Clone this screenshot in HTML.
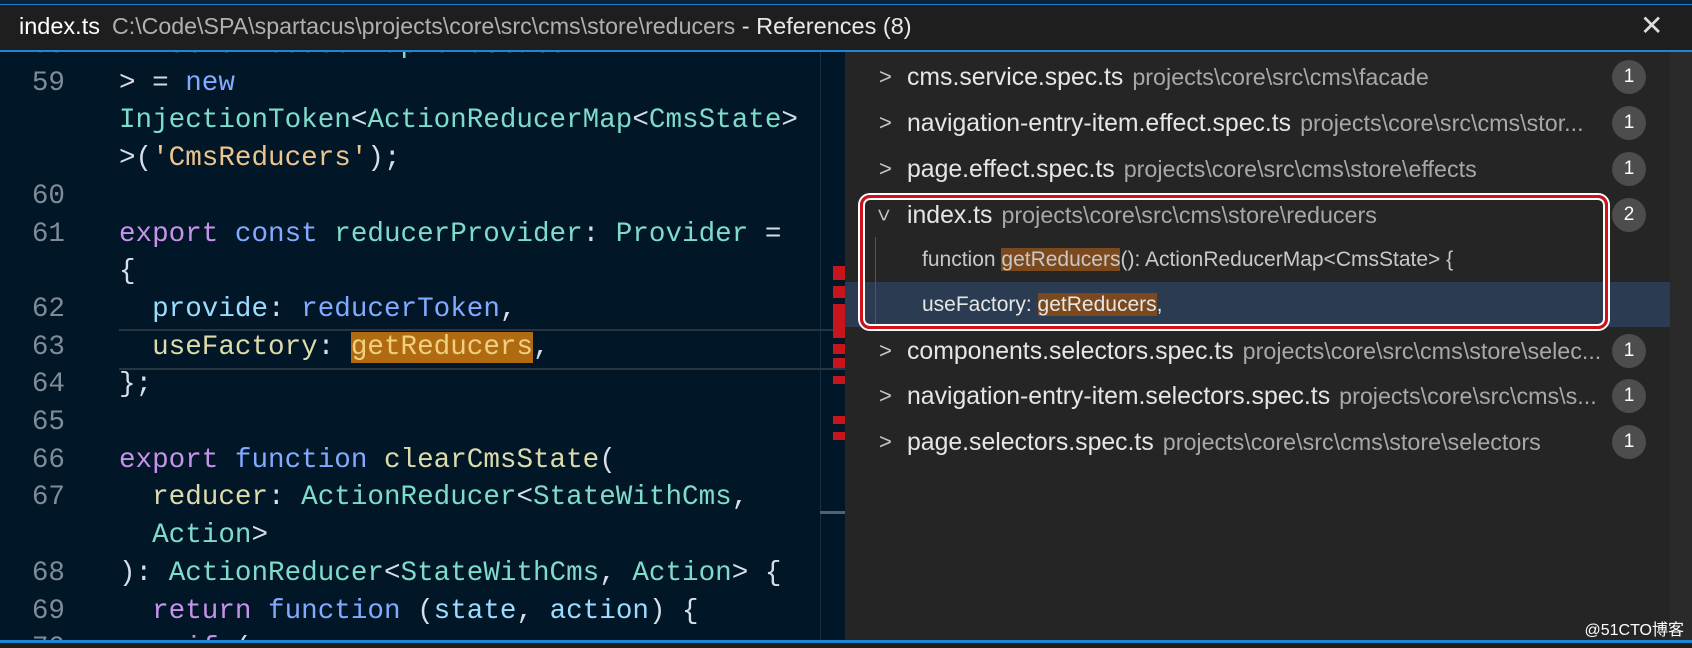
<!DOCTYPE html>
<html><head><meta charset="utf-8"><style>
body{margin:0;width:1692px;height:648px;overflow:hidden;background:#1e1e1e;position:relative;font-family:"Liberation Sans",sans-serif}
.abs{position:absolute}
#top{left:0;top:0;width:1692px;height:4px;background:#0d2236;border-bottom:1px solid #1f7ccf}
#hdr{left:0;top:5px;width:1692px;height:45px;background:#1e1e1e;border-bottom:2px solid #1f86d6;white-space:nowrap}
#ed{left:0;top:52px;width:845px;height:588px;background:#011627;overflow:hidden}
#code{left:0;top:-25px;font-family:"Liberation Mono",monospace;font-size:27.6px;line-height:37.7px;white-space:pre;color:#d6deeb}
.ln{display:inline-block;width:65px;text-align:right;color:#7f8c98;margin-right:54px}
.k{color:#c792ea}.b{color:#82aaff}.t{color:#7fdbca}.s{color:#ecc48d}.p{color:#d7dbe0}.y{color:#dcdcaa}.lb{color:#9cdcfe}
#panel{left:845px;top:52px;width:847px;height:588px;background:#252526}
.row{position:absolute;left:0;width:825px;height:46px;line-height:46px;font-size:24.8px;color:#e6e6e6;white-space:nowrap}
.row .ch{position:absolute;left:34px;top:0;color:#c5c5c5;font-size:22px}
.row .n{position:absolute;left:62px}
.row .pa{color:#a8a8a8;font-size:23.3px;margin-left:9px}
.row.sub{font-size:21px}
.badge{position:absolute;left:767px;top:6px;width:34px;height:34px;border-radius:17px;background:#4d4d4d;color:#fff;text-align:center;line-height:34px;font-size:19px}
.hl{background:#7a4a1e}
#bot{left:0;top:640px;width:1692px;height:3px;background:#1f86d6}
</style></head><body>
<div class="abs" id="ed">
<div class="abs" style="left:820px;top:0;width:1px;height:588px;background:#17304a"></div>
<div class="abs" style="left:119px;top:277px;width:726px;height:37px;border-top:2px solid #28353f;border-bottom:2px solid #28353f"></div>
<div class="abs" style="left:833px;top:214px;width:12px;height:14px;background:#c8151b"></div>
<div class="abs" style="left:833px;top:234px;width:12px;height:12px;background:#c8151b"></div>
<div class="abs" style="left:833px;top:252px;width:12px;height:34px;background:#c8151b"></div>
<div class="abs" style="left:833px;top:292px;width:12px;height:10px;background:#c8151b"></div>
<div class="abs" style="left:833px;top:306px;width:12px;height:10px;background:#c8151b"></div>
<div class="abs" style="left:833px;top:324px;width:12px;height:8px;background:#c8151b"></div>
<div class="abs" style="left:833px;top:364px;width:12px;height:8px;background:#c8151b"></div>
<div class="abs" style="left:833px;top:380px;width:12px;height:8px;background:#c8151b"></div>
<div class="abs" style="left:820px;top:459px;width:25px;height:3px;background:#4d6478"></div>
<div class="abs" id="code"><span class="ln">58</span>  <span class="t">ActionReducerMap&lt;CmsState&gt;</span>
<span class="ln">59</span><span class="p">&gt; = </span><span class="b">new</span>
<span class="ln"> </span><span class="t">InjectionToken</span>&lt;<span class="t">ActionReducerMap</span>&lt;<span class="t">CmsState</span>&gt;
<span class="ln"> </span>&gt;(<span class="s">'CmsReducers'</span>);
<span class="ln">60</span>
<span class="ln">61</span><span class="k">export</span> <span class="b">const</span> <span class="t">reducerProvider</span>: <span class="t">Provider</span> =
<span class="ln"> </span>{
<span class="ln">62</span>  <span class="lb">provide</span>: <span class="b">reducerToken</span>,
<span class="ln">63</span>  <span class="y">useFactory</span>: <span style="background:#b06a10;color:#f0d080">getReducers</span>,
<span class="ln">64</span>};
<span class="ln">65</span>
<span class="ln">66</span><span class="k">export</span> <span class="b">function</span> <span class="y">clearCmsState</span>(
<span class="ln">67</span>  <span class="y">reducer</span>: <span class="t">ActionReducer</span>&lt;<span class="t">StateWithCms</span>,
<span class="ln"> </span>  <span class="t">Action</span>&gt;
<span class="ln">68</span>): <span class="t">ActionReducer</span>&lt;<span class="t">StateWithCms</span>, <span class="t">Action</span>&gt; {
<span class="ln">69</span>  <span class="k">return</span> <span class="b">function</span> (<span class="lb">state</span>, <span class="lb">action</span>) {
<span class="ln">70</span>    <span class="k">if</span> (</div>
</div>
<div class="abs" id="panel">
<div class="abs" style="left:0;top:230px;width:825px;height:45px;background:#2b3c52"></div>
<div class="abs" style="left:30px;top:185px;width:1px;height:90px;background:#555"></div>
<div class="row" style="top:2px"><span class="ch">&gt;</span><span class="n">cms.service.spec.ts<span class="pa">projects\core\src\cms\facade</span></span><div class="badge">1</div></div>
<div class="row" style="top:48px"><span class="ch">&gt;</span><span class="n">navigation-entry-item.effect.spec.ts<span class="pa">projects\core\src\cms\stor...</span></span><div class="badge">1</div></div>
<div class="row" style="top:94px"><span class="ch">&gt;</span><span class="n">page.effect.spec.ts<span class="pa">projects\core\src\cms\store\effects</span></span><div class="badge">1</div></div>
<div class="row" style="top:140px"><span class="ch" style="transform:rotate(90deg);left:32px">&gt;</span><span class="n">index.ts<span class="pa">projects\core\src\cms\store\reducers</span></span><div class="badge">2</div></div>
<div class="row sub" style="top:185px"><span class="n" style="left:77px;color:#c8c8c8">function <span class="hl">getReducers</span>(): ActionReducerMap&lt;CmsState&gt; {</span></div>
<div class="row sub" style="top:230px"><span class="n" style="left:77px">useFactory: <span class="hl">getReducers</span>,</span></div>
<div class="row" style="top:276px"><span class="ch">&gt;</span><span class="n">components.selectors.spec.ts<span class="pa">projects\core\src\cms\store\selec...</span></span><div class="badge">1</div></div>
<div class="row" style="top:321px"><span class="ch">&gt;</span><span class="n">navigation-entry-item.selectors.spec.ts<span class="pa">projects\core\src\cms\s...</span></span><div class="badge">1</div></div>
<div class="row" style="top:367px"><span class="ch">&gt;</span><span class="n">page.selectors.spec.ts<span class="pa">projects\core\src\cms\store\selectors</span></span><div class="badge">1</div></div>
<div class="abs" style="left:15px;top:143px;width:742px;height:128px;border:3px solid #d0121b;border-radius:10px;box-shadow:inset 0 0 0 2px #fff,0 0 0 2px #fff"></div>
<div class="abs" style="left:825px;top:0;width:22px;height:588px;background:#2a2a2a"></div>
<div class="abs" style="right:8px;bottom:0;color:#fff;font-size:16px;font-family:'Liberation Sans','Noto Sans CJK SC',sans-serif">@51CTO博客</div>
</div>
<div class="abs" id="top"></div>
<div class="abs" id="hdr"><div class="abs" style="left:19px;top:8px;font-size:23.5px;color:#fff">index.ts<span style="font-size:23.2px;color:#b0b0b0;margin-left:12px">C:\Code\SPA\spartacus\projects\core\src\cms\store\reducers</span><span style="color:#e8e8e8"> - References (8)</span></div><span class="abs" style="left:1640px;top:4px;font-size:28px;color:#ddd">✕</span></div>
<div class="abs" id="bot"></div>
</body></html>
